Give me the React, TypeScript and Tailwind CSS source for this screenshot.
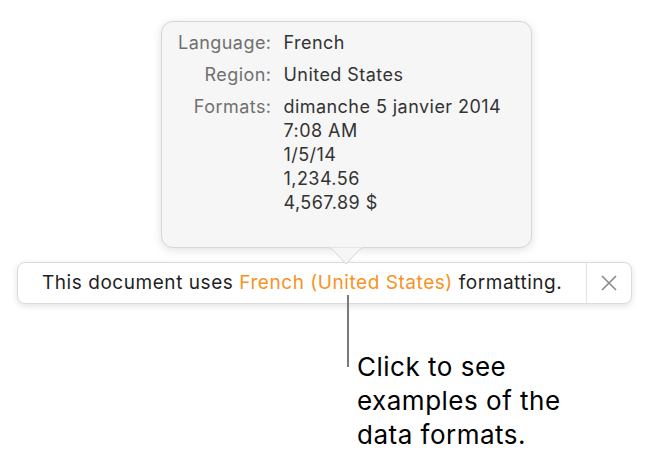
import React from "react";

export default function App() {
  const rows: { label: string; values: string[] }[] = [
    { label: "Language:", values: ["French"] },
    { label: "Region:", values: ["United States"] },
    {
      label: "Formats:",
      values: ["dimanche 5 janvier 2014", "7:08 AM", "1/5/14", "1,234.56", "4,567.89 $"],
    },
  ];
  return (
    <div
      className="relative w-[654px] h-[464px] bg-white overflow-hidden"
      style={{ fontFamily: "Inter, 'Liberation Sans', sans-serif" }}
    >
      <div className="pt-[21px] pl-[161px]">
        <div className="relative z-10 w-[371px] h-[227px] rounded-[12px] bg-[#f6f6f6] border border-[#d6d6d6] shadow-[0_2px_10px_rgba(0,0,0,0.12)]">
          <div className="grid grid-cols-[auto_1fr] gap-x-[12px] gap-y-[8px] pl-[16px] pt-[9px] text-[18px] leading-[24px] tracking-[0.45px]">
            {rows.map((r) => (
              <React.Fragment key={r.label}>
                <div className="text-right text-[#707070]">{r.label}</div>
                <div className="text-[#333333]">
                  {r.values.map((v) => (
                    <div key={v}>{v}</div>
                  ))}
                </div>
              </React.Fragment>
            ))}
          </div>
          <svg
            className="absolute left-[164px] top-[225px]"
            width="40"
            height="20"
            viewBox="0 0 40 20"
          >
            <path
              d="M0 0.5 C4 0.5 6 1.5 8 4 L20 17 L32 4 C34 1.5 36 0.5 40 0.5 Z"
              fill="#f6f6f6"
            />
            <path
              d="M0 0.5 C4 0.5 6 1.5 8 4 L20 17 L32 4 C34 1.5 36 0.5 40 0.5"
              fill="none"
              stroke="#d6d6d6"
              strokeWidth="1"
            />
          </svg>
        </div>
      </div>

      <div className="mt-[14px] ml-[17px] w-[615px] h-[42px] rounded-[8px] bg-white border border-[#dcdcdc] shadow-[0_2px_6px_rgba(0,0,0,0.12)] flex items-center">
        <div className="flex-1 pl-[24px] text-[19px] tracking-[0.55px] text-[#1f1f1f] whitespace-nowrap">
          This document uses <span className="text-[#f7931e]">French (United States)</span> formatting.
        </div>
        <div className="w-[45px] h-full border-l border-[#e2e2e2] flex items-center justify-center">
          <svg width="16" height="16" viewBox="0 0 16 16">
            <path d="M1 1 L15 15 M15 1 L1 15" stroke="#8a8a8a" strokeWidth="1.6" fill="none" />
          </svg>
        </div>
      </div>

      <div className="absolute left-[347px] top-[295px] w-[2px] h-[72px] bg-[#7a7a7a] z-20" />

      <div className="ml-[357px] mt-[46px] w-[280px] text-[26px] leading-[34px] tracking-[0.5px] text-black">
        Click to see
        <br />
        examples of the
        <br />
        data formats.
      </div>
    </div>
  );
}
